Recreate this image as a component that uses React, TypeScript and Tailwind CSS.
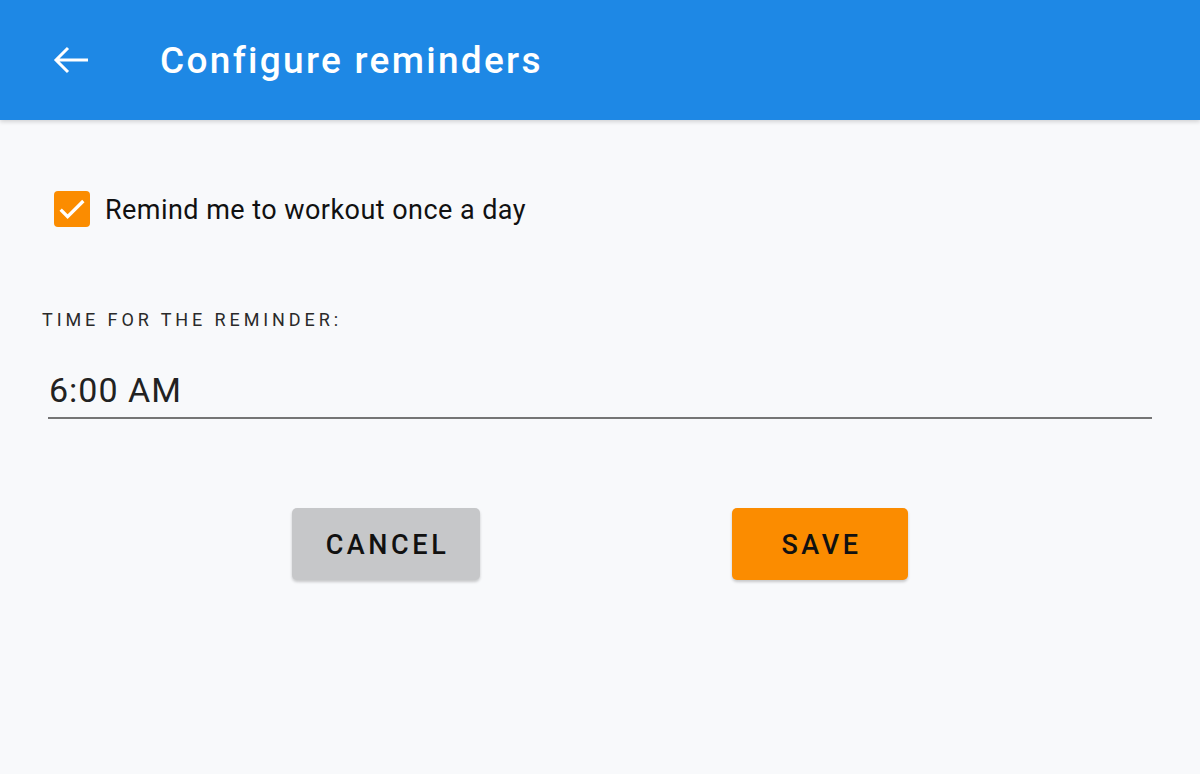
import React from "react";

export default function App() {
  return (
    <div className="w-[1200px] h-[774px] bg-[#f8f9fb] flex flex-col" style={{ fontFamily: "Roboto, 'Noto Sans', sans-serif" }}>
      <header className="h-[120px] bg-[#1e88e5] flex items-center shadow-[0_2px_4px_rgba(0,0,0,0.15)] relative z-10">
        <div className="w-[160px] pl-[46px] flex items-center">
          <svg width="48" height="48" viewBox="0 0 24 24" fill="none">
            <path d="M21 12H5.2M11 6L5 12l6 6" stroke="white" strokeWidth="1.5" />
          </svg>
        </div>
        <h1 className="text-white text-[37px] font-medium tracking-[2.3px] leading-none">Configure reminders</h1>
      </header>
      <main className="flex flex-col px-[48px]">
        <label className="flex items-center mt-[71px] ml-[6px] gap-[15px]">
          <span className="w-[36px] h-[36px] bg-[#fb8c00] rounded-[4px] flex items-center justify-center">
            <svg width="32" height="32" viewBox="0 0 24 24" fill="none">
              <path d="M3.5 12.5l5.2 5.2L20.5 6" stroke="white" strokeWidth="2.5" />
            </svg>
          </span>
          <span className="text-[27px] tracking-[0.45px] text-[#111] leading-none mt-[2px]">Remind me to workout once a day</span>
        </label>
        <div className="mt-[84px] ml-[-6px] text-[18px] tracking-[3.9px] text-[#2a2a2a] leading-none">TIME FOR THE REMINDER:</div>
        <div className="mt-[44px] border-b-2 border-[#757575] pb-[8px] pl-[1px]">
          <span className="text-[34px] tracking-[1px] text-[#222] leading-none">6:00 AM</span>
        </div>
        <div className="flex justify-center gap-[252px] mt-[89px]">
          <button className="w-[188px] h-[72px] bg-[#c6c7c9] rounded-[5px] shadow-[0_2px_3px_rgba(0,0,0,0.2)] text-[27px] font-medium tracking-[3.6px] text-[#111] pl-[3px] pt-[3px]">CANCEL</button>
          <button className="w-[176px] h-[72px] bg-[#fb8c00] rounded-[5px] shadow-[0_2px_3px_rgba(0,0,0,0.2)] text-[27px] font-medium tracking-[3.6px] text-[#111] pl-[3px] pt-[3px]">SAVE</button>
        </div>
      </main>
    </div>
  );
}
